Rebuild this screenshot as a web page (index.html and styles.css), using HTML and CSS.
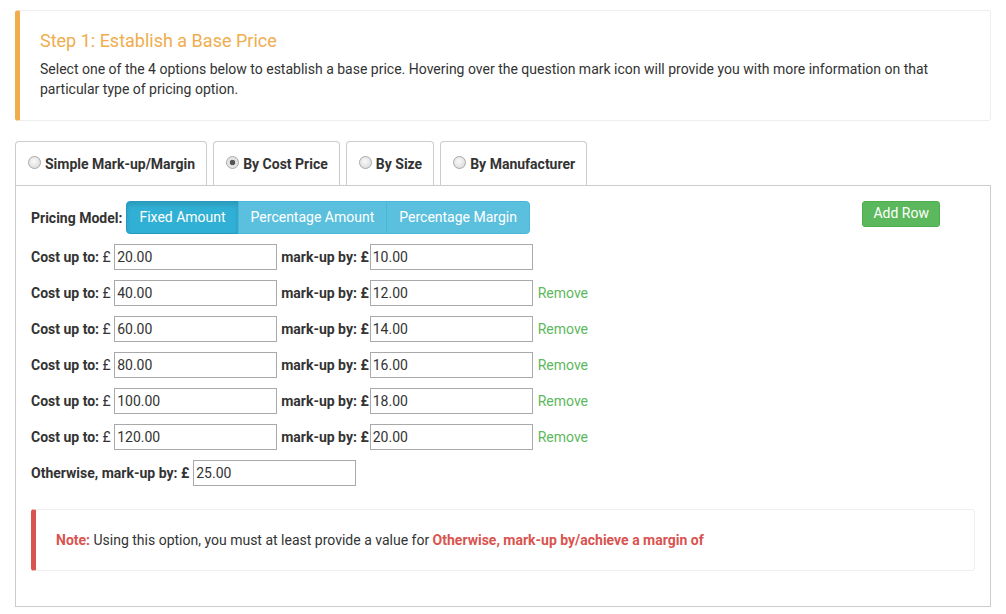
FILE: index.html
```html
<!DOCTYPE html>
<html lang="en">
<head>
  <meta charset="UTF-8" />
  <title>Base Price</title>
  <link rel="stylesheet" href="styles.css">
</head>
<body>
  <div class="wrap">
    <!-- Step callout -->
    <div class="callout">
      <h4>Step 1: Establish a Base Price</h4>
      <p>Select one of the 4 options below to establish a base price. Hovering over the question mark icon will provide you with more information on that particular type of pricing option.</p>
    </div>

    <!-- Tabs -->
    <ul class="tabs">
      <li><label><input type="radio" name="method"> Simple Mark-up/Margin</label></li>
      <li><label><input type="radio" name="method" checked> By Cost Price</label></li>
      <li><label><input type="radio" name="method"> By Size</label></li>
      <li><label><input type="radio" name="method"> By Manufacturer</label></li>
    </ul>

    <div class="panel">
      <div class="model-row">
        <b>Pricing Model:</b>
        <div class="btn-group">
          <button class="btn-info active">Fixed Amount</button>
          <button class="btn-info">Percentage Amount</button>
          <button class="btn-info">Percentage Margin</button>
        </div>
        <button class="btn-add">Add Row</button>
      </div>

      <div class="price-row">
        <b>Cost up to:</b>&nbsp;£ <input type="text" value="20.00">
        <b class="mk">mark-up by: £</b> <input class="val" type="text" value="10.00">
      </div>
      <div class="price-row">
        <b>Cost up to:</b>&nbsp;£ <input type="text" value="40.00">
        <b class="mk">mark-up by: £</b> <input class="val" type="text" value="12.00">
        <a class="remove">Remove</a>
      </div>
      <div class="price-row">
        <b>Cost up to:</b>&nbsp;£ <input type="text" value="60.00">
        <b class="mk">mark-up by: £</b> <input class="val" type="text" value="14.00">
        <a class="remove">Remove</a>
      </div>
      <div class="price-row">
        <b>Cost up to:</b>&nbsp;£ <input type="text" value="80.00">
        <b class="mk">mark-up by: £</b> <input class="val" type="text" value="16.00">
        <a class="remove">Remove</a>
      </div>
      <div class="price-row">
        <b>Cost up to:</b>&nbsp;£ <input type="text" value="100.00">
        <b class="mk">mark-up by: £</b> <input class="val" type="text" value="18.00">
        <a class="remove">Remove</a>
      </div>
      <div class="price-row">
        <b>Cost up to:</b>&nbsp;£ <input type="text" value="120.00">
        <b class="mk">mark-up by: £</b> <input class="val" type="text" value="20.00">
        <a class="remove">Remove</a>
      </div>
      <div class="price-row">
        <b>Otherwise, mark-up by: £</b> <input class="val" type="text" value="25.00">
      </div>

      <div class="note">
        <b class="red">Note:</b> Using this option, you must at least provide a value for <b class="red">Otherwise, mark-up by/achieve a margin of</b>
      </div>
    </div>
  </div>
</body>
</html>
```

FILE: styles.css
```css
body {
  margin: 0;
  font-family: Roboto, "Liberation Sans", sans-serif;
  font-size: 14px;
  line-height: 20px;
  color: #333;
  background: #fff;
}

.wrap {
  width: 976px;
  padding: 10px 15px;
}

b {
  font-weight: 700;
}

.callout {
  padding: 20px 20px 21px;
  border: 1px solid #eee;
  border-left: 5px solid #f0ad4e;
  border-radius: 3px;
}

.callout h4 {
  margin: 0 0 8px;
  font-size: 18px;
  font-weight: 400;
  line-height: 20px;
  color: #f0ad4e;
}

.callout p {
  margin: 0;
}

.tabs {
  display: flex;
  gap: 6px;
  list-style: none;
  margin: 20px 0 0;
  padding: 0;
}

.tabs li {
  border: 1px solid #ccc;
  border-bottom: none;
  border-radius: 4px 4px 0 0;
  padding: 12px 11px 11px 12px;
  font-weight: 700;
  white-space: nowrap;
}

.tabs label {
  display: flex;
  align-items: center;
  gap: 4px;
}

.tabs input {
  appearance: none;
  width: 13px;
  height: 13px;
  margin: 0 0 4px 0;
  border: 1px solid #a8a8a8;
  border-radius: 50%;
  background: radial-gradient(circle at 45% 40%, #fafafa, #d4d4d4);
}

.tabs input:checked {
  background: radial-gradient(circle, #555 0, #555 2.5px, #dcdcdc 3px, #f4f4f4 100%);
}

.panel {
  border: 1px solid #ccc;
  padding: 15px;
}

.model-row {
  display: flex;
  align-items: center;
  gap: 4px;
  margin-bottom: 10px;
}

.btn-group {
  display: flex;
}

.btn-info {
  font-family: inherit;
  font-size: 14px;
  line-height: 19px;
  padding: 6px 12px;
  color: #fff;
  background: #5bc0de;
  border: 1px solid #46b8da;
  margin-left: -1px;
  cursor: pointer;
}

.btn-info:first-child {
  margin-left: 0;
  border-radius: 4px 0 0 4px;
}

.btn-info:last-child {
  border-radius: 0 4px 4px 0;
}

.btn-info.active {
  background: #31b0d5;
  border-color: #269abc;
  box-shadow: inset 0 3px 5px rgba(0, 0, 0, 0.125);
}

.btn-add {
  align-self: flex-start;
  margin-left: auto;
  margin-right: 35px;
  font-family: inherit;
  font-size: 14px;
  line-height: 21px;
  padding: 1px 10px 2px;
  color: #fff;
  background: #5cb85c;
  border: 1px solid #4cae4c;
  border-radius: 3px;
}

.price-row {
  display: flex;
  align-items: center;
  height: 26px;
  margin-bottom: 10px;
  white-space: pre;
}

.price-row input {
  width: 163px;
  height: 26px;
  box-sizing: border-box;
  margin: 0;
  padding: 1px 2px;
  border: 1px solid #a9a9a9;
  font-family: inherit;
  font-size: 14px;
  color: #333;
}

.price-row input.val {
  margin-left: 4px;
}

.price-row .mk {
  margin-left: 4px;
}

.price-row .mk + .val {
  margin-left: 1px;
}

.remove {
  margin-left: 5px;
  color: #5cb85c;
  cursor: pointer;
}

.note {
  margin: 23px 0 20px;
  padding: 20px;
  border: 1px solid #eee;
  border-left: 5px solid #d9534f;
  border-radius: 3px;
}

.red {
  color: #d9534f;
}
```
